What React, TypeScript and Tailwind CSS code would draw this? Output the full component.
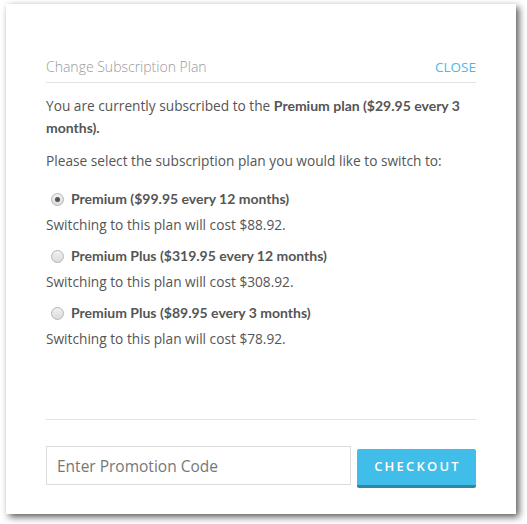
import React from "react";

const plans = [
  { label: "Premium ($99.95 every 12 months)", cost: "$88.92", checked: true },
  { label: "Premium Plus ($319.95 every 12 months)", cost: "$308.92", checked: false },
  { label: "Premium Plus ($89.95 every 3 months)", cost: "$78.92", checked: false },
];

const boldFont = { fontFamily: 'Lato, "Open Sans", "Liberation Sans", sans-serif' };

function Radio({ checked }: { checked: boolean }) {
  return (
    <span className="relative inline-flex h-[13px] w-[13px] items-center justify-center rounded-full border border-[#b5b5b5] bg-gradient-to-b from-[#f0f0f0] to-[#dcdcdc]">
      {checked && <span className="h-[5px] w-[5px] rounded-full bg-[#555]" />}
    </span>
  );
}

export default function App() {
  return (
    <div className="min-h-[524px] w-[527px] bg-white pl-[6px] pt-[4px]" style={{ fontFamily: '"Open Sans", "Liberation Sans", sans-serif' }}>
      <div className="flex h-[510px] w-[510px] flex-col bg-white px-[40px] shadow-[3px_3px_7px_rgba(0,0,0,0.65)]">
        <div className="mt-[53px] flex items-center justify-between border-b border-[#e3e3e3] pb-[5px] text-[14px] leading-[20px]">
          <span className="font-light text-[#9a9a9a]">Change Subscription Plan</span>
          <span className="text-[13.5px] text-[#4bb8e6]">CLOSE</span>
        </div>
        <p className="mt-[12px] text-[13.7px] leading-[22px] text-[#555]">
          You are currently subscribed to the{" "}
          <b className="text-[14px] font-bold leading-[22px]" style={boldFont}>Premium plan ($29.95 every 3</b>{" "}
          <b className="text-[14px] font-bold leading-[22px]" style={boldFont}>months).</b>
        </p>
        <p className="mt-[11px] text-[13.7px] leading-[22px] text-[#555]">
          Please select the subscription plan you would like to switch to:
        </p>
        <div className="mt-[17px] flex flex-col gap-[11px]">
          {plans.map((p, i) => (
            <div key={i} className="text-[13.7px] text-[#555]">
              <div className="flex items-center gap-[7px] pl-[5px] leading-[20px]">
                <Radio checked={p.checked} />
                <span className="text-[14px] font-bold" style={boldFont}>{p.label}</span>
              </div>
              <div className="mt-[6px] leading-[20px]">Switching to this plan will cost {p.cost}.</div>
            </div>
          ))}
        </div>
        <div className="mt-auto border-t border-[#e3e3e3] pt-[26px] pb-[26px]">
          <div className="flex items-start gap-[6px]">
            <input
              className="h-[39px] w-[305px] border border-[#dcdcdc] px-[10px] text-[15.5px] text-[#555] outline-none placeholder:text-[#777]"
              placeholder="Enter Promotion Code"
              style={{ fontFamily: '"Open Sans", "Liberation Sans", sans-serif' }}
            />
            <button className="mt-[3px] flex h-[39px] w-[119px] items-center justify-center rounded-[2px] border-b-[3px] border-[#2f87a8] bg-[#40bde8] pl-[2px] text-[13px] font-semibold tracking-[2.2px] text-white">
              CHECKOUT
            </button>
          </div>
        </div>
      </div>
    </div>
  );
}
